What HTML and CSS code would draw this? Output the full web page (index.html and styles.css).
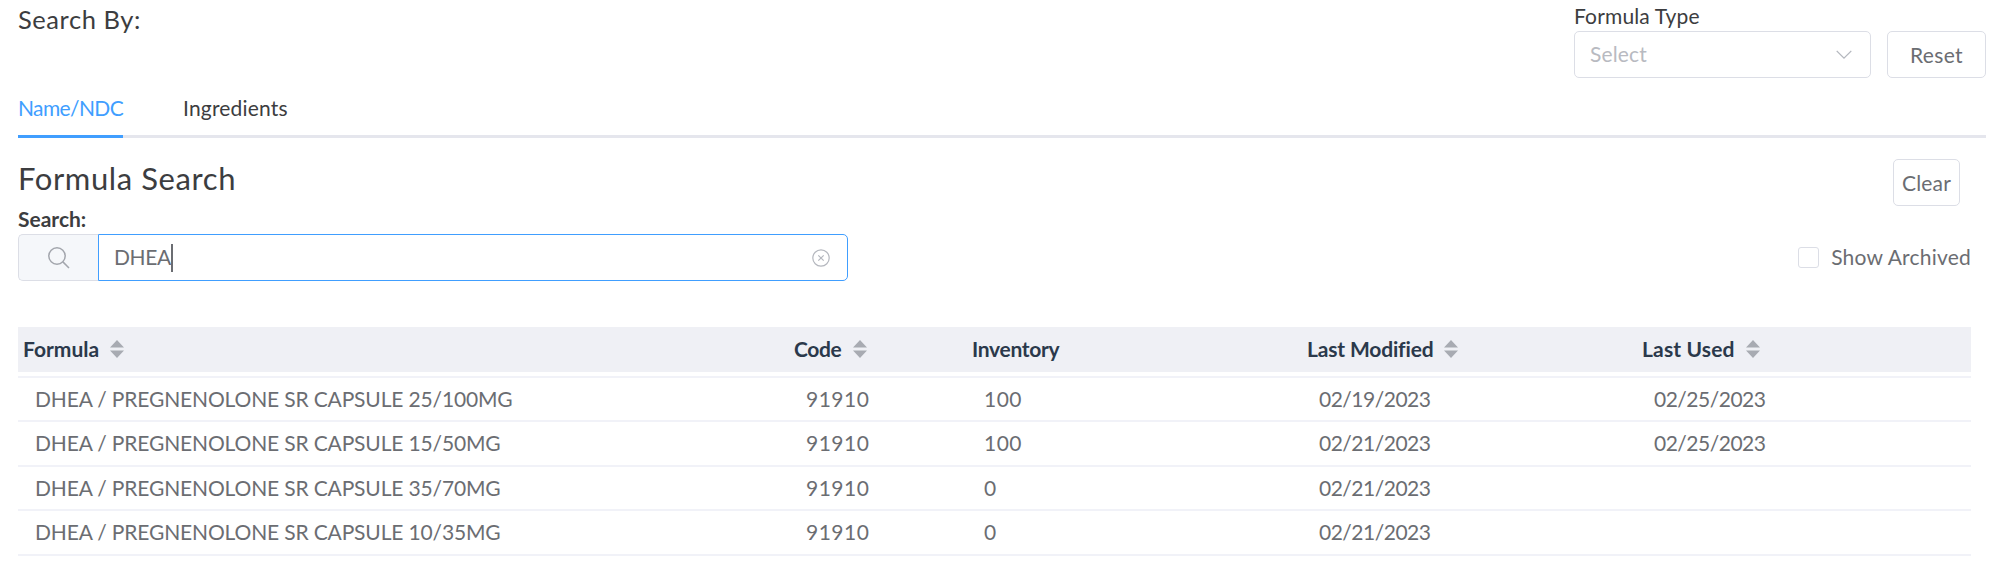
FILE: index.html
```html
<!DOCTYPE html>
<html lang="en">
<head>
<meta charset="utf-8">
<title>Formula Search</title>
<link rel="stylesheet" href="styles.css">
</head>
<body>
<svg class="defs" width="0" height="0">
  <symbol id="sort" viewBox="0 0 14 18"><path d="M7 0L14 7.4H0zM7 18L0 10.6H14z" fill="#a8abb2"/></symbol>
</svg>
<main class="page">
  <header class="top">
    <h1 class="top-title">Search By:</h1>
    <div class="filters">
      <div class="field">
        <label class="field-label">Formula Type</label>
        <div class="select"><span class="select-text">Select</span>
          <svg class="chevron" viewBox="0 0 16 10"><path d="M.7.9L8 8.2 15.3.9" fill="none" stroke="#b4b7be" stroke-width="1.3"/></svg>
        </div>
      </div>
      <button class="btn btn-reset">Reset</button>
    </div>
  </header>

  <nav class="tabs">
    <a class="tab tab-active">Name/NDC</a>
    <a class="tab tab-ingredients">Ingredients</a>
  </nav>

  <section class="search">
    <div class="search-head">
      <h2 class="search-title">Formula Search</h2>
      <button class="btn btn-clear">Clear</button>
    </div>
    <label class="search-label">Search:</label>
    <div class="search-row">
      <div class="input-group">
        <div class="prepend">
          <svg class="magnifier" viewBox="0 0 22 22"><g fill="none" stroke="#a3a6ad" stroke-width="1.5"><circle cx="9" cy="9" r="8.2"/><path d="M14.9 14.9L21 21"/></g></svg>
        </div>
        <div class="input"><span class="input-text">DHEA</span><span class="caret"></span>
          <svg class="clear-icon" viewBox="0 0 18 18"><g fill="none" stroke="#b4b7be" stroke-width="1.2"><circle cx="9" cy="9" r="8.2"/><path d="M6.3 6.3l5.4 5.4M11.7 6.3l-5.4 5.4"/></g></svg>
        </div>
      </div>
      <label class="check"><span class="box"></span><span class="check-text">Show Archived</span></label>
    </div>
  </section>

  <section class="table">
    <div class="row head">
      <div><span class="h-formula">Formula</span><svg class="sort"><use href="#sort"/></svg></div>
      <div><span class="h-code">Code</span><svg class="sort"><use href="#sort"/></svg></div>
      <div><span class="h-inventory">Inventory</span></div>
      <div><span class="h-modified">Last Modified</span><svg class="sort"><use href="#sort"/></svg></div>
      <div><span class="h-used">Last Used</span><svg class="sort"><use href="#sort"/></svg></div>
    </div>
    <div class="body">
      <div class="row"><div class="name">DHEA / PREGNENOLONE SR CAPSULE 25/100MG</div><div class="num">91910</div><div class="num">100</div><div class="date">02/19/2023</div><div class="date">02/25/2023</div></div>
      <div class="row"><div class="name">DHEA / PREGNENOLONE SR CAPSULE 15/50MG</div><div class="num">91910</div><div class="num">100</div><div class="date">02/21/2023</div><div class="date">02/25/2023</div></div>
      <div class="row"><div class="name">DHEA / PREGNENOLONE SR CAPSULE 35/70MG</div><div class="num">91910</div><div class="num">0</div><div class="date">02/21/2023</div><div class="date"></div></div>
      <div class="row"><div class="name">DHEA / PREGNENOLONE SR CAPSULE 10/35MG</div><div class="num">91910</div><div class="num">0</div><div class="date">02/21/2023</div><div class="date"></div></div>
    </div>
  </section>
</main>
</body>
</html>
```
FILE: styles.css
```css
* { box-sizing: border-box; }
body { margin: 0; background: #fff; color: #6b6d72; font: 400 21px/42px Lato, "Open Sans", sans-serif; }
h1, h2 { margin: 0; font-weight: 400; color: #3c3d40; }
svg { display: block; flex: none; }
.defs { position: absolute; }
.page { padding: 0 13px 0 18px; }

.top { display: flex; justify-content: space-between; height: 86px; }
.top-title { font-size: 25.5px; line-height: 39px; letter-spacing: .57px; }
.filters { display: flex; align-items: flex-start; gap: 15px; }
.field { margin-right: 1px; }
.field-label { display: block; line-height: 31px; color: #3c3d40; letter-spacing: .15px; }
.select { display: flex; align-items: center; justify-content: space-between; width: 297px; height: 47px; padding: 0 18px 0 15px; border: 1px solid #dcdee6; border-radius: 5px; }
.select-text { padding-bottom: 1px; color: #b8bac1; letter-spacing: .15px; }
.chevron { width: 16px; height: 10px; }

.btn { height: 47px; padding: 0; border: 1px solid #dcdee6; border-radius: 5px; background: #fff; color: #6b6d72; font: inherit; line-height: 44px; letter-spacing: .2px; }
.btn-reset { width: 99px; margin-top: 31px; letter-spacing: .33px; }
.btn-clear { width: 67px; margin: 1px 26px 0 0; }

.tabs { display: flex; gap: 60px; height: 52px; box-shadow: inset 0 -3px #e5e6ed; }
.tab { color: #3c3d40; line-height: 43px; }
.tab-active { width: 105px; border-bottom: 3px solid #409eff; color: #409eff; letter-spacing: -.62px; white-space: nowrap; }
.tab-ingredients { letter-spacing: .19px; }

.search { padding-top: 20px; }
.search-head { display: flex; justify-content: space-between; height: 46px; }
.search-title { font-size: 31px; line-height: 40px; letter-spacing: .6px; }
.search-label { display: block; line-height: 30px; color: #3c3d40; font-weight: 700; }
.search-row { display: flex; align-items: center; justify-content: space-between; padding-right: 15px; }
.input-group { display: flex; width: 830px; height: 47px; }
.prepend { display: flex; align-items: center; justify-content: center; width: 80px; border: 1px solid #dcdee6; border-right: 0; border-radius: 5px 0 0 5px; background: #f5f7fa; }
.magnifier { width: 22px; height: 22px; }
.input { display: flex; align-items: center; flex: 1; padding: 0 17px 0 15px; border: 1px solid #409eff; border-radius: 0 5px 5px 0; }
.input-text { padding-bottom: 1px; letter-spacing: -.4px; }
.caret { width: 2px; height: 28px; background: #6b6d72; }
.clear-icon { width: 18px; height: 18px; margin-left: auto; }
.check { display: flex; align-items: center; gap: 12px; }
.box { width: 21px; height: 21px; border: 1px solid #dcdee6; border-radius: 3px; }
.check-text { padding-bottom: 1px; letter-spacing: .22px; }

.table { width: 1953px; margin-top: 46px; }
.row { display: grid; grid-template-columns: 770px 178px 335px 335px 335px; height: 44.5px; line-height: 41px; }
.head { background: #eff0f5; color: #2b394b; font-weight: 700; }
.head > div { display: flex; align-items: center; gap: 11px; padding: 0 0 0 6px; }
.head span { padding-bottom: 2px; }
.sort { width: 14px; height: 18px; }
.h-formula { margin-left: -1px; }
.h-code { margin-right: 1px; letter-spacing: -.38px; }
.h-inventory { letter-spacing: -.31px; }
.h-modified { letter-spacing: -.16px; }
.h-used { letter-spacing: .16px; }
.body { margin-top: 4px; border-top: 2px solid #f1f2f8; }
.body .row { border-bottom: 2px solid #f1f2f8; }
.body .row > div { padding-left: 18px; }
.body .row > .name { padding-left: 17px; letter-spacing: -.15px; }
.num { letter-spacing: .5px; }
.date { letter-spacing: -.5px; }
```
